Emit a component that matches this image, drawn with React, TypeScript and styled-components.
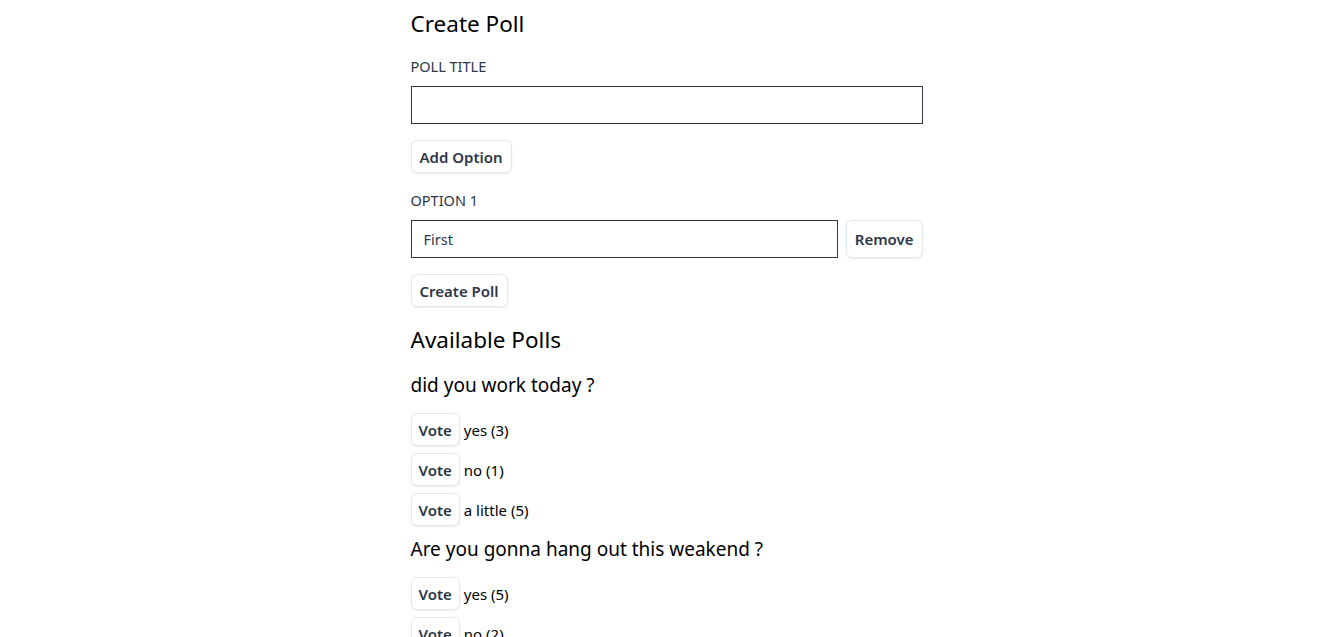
import React from 'react';
import styled, { createGlobalStyle } from 'styled-components';

const GlobalStyle = createGlobalStyle`
  * {
    box-sizing: border-box;
  }
  body {
    margin: 0;
    background: #fff;
    font-family: 'Noto Sans', 'Open Sans', sans-serif;
    color: #000;
  }
`;

const Container = styled.div`
  max-width: 512px;
  margin: 0 auto;
  padding-top: 8px;
`;

const Title = styled.h2`
  font-size: 22.5px;
  line-height: 32px;
  font-weight: 400;
  margin: 0 0 16px;
`;

const Label = styled.label`
  display: block;
  font-size: 14.5px;
  line-height: 20px;
  text-transform: uppercase;
  color: #2d3748;
  margin-bottom: 10px;
`;

const Input = styled.input`
  display: block;
  width: 100%;
  height: 38px;
  border: 1px solid #2d3748;
  border-radius: 0;
  padding: 0 12px;
  font-family: inherit;
  font-size: 14.5px;
  color: #2d3748;
  outline: none;
`;

const Field = styled.div`
  margin-bottom: 16px;
`;

const Button = styled.button`
  background: #fff;
  border: 1px solid #e2e8f0;
  border-radius: 6px;
  box-shadow: 0 1px 2px rgba(0, 0, 0, 0.08);
  padding: 0 8px;
  height: 33px;
  font-family: inherit;
  font-size: 15px;
  font-weight: 600;
  color: #2d3748;
  cursor: pointer;
`;

const ActionRow = styled.div`
  margin-bottom: 17px;
`;

const OptionRow = styled.div`
  display: flex;
  gap: 8px;
  ${Input} {
    flex: 1;
  }
  ${Button} {
    height: auto;
  }
`;

const PollQuestion = styled.h3`
  font-size: 19px;
  line-height: 28px;
  font-weight: 400;
  margin: 0 0 14px;
`;

const VoteList = styled.div`
  display: flex;
  flex-direction: column;
  gap: 7px;
  margin-bottom: 9px;
`;

const VoteRow = styled.div`
  display: flex;
  align-items: center;
  gap: 4px;
  font-size: 15px;

  ${Button} {
    padding: 0 7px;
  }
`;

const PollsTitle = styled(Title)`
  margin-bottom: 15px;
`;

const polls = [
  {
    question: 'did you work today ?',
    options: [
      { text: 'yes', votes: 3 },
      { text: 'no', votes: 1 },
      { text: 'a little', votes: 5 },
    ],
  },
  {
    question: 'Are you gonna hang out this weakend ?',
    options: [
      { text: 'yes', votes: 5 },
      { text: 'no', votes: 2 },
    ],
  },
];

export default function App() {
  return (
    <>
      <GlobalStyle />
      <Container>
        <Title>Create Poll</Title>
        <Field>
          <Label>Poll Title</Label>
          <Input />
        </Field>
        <ActionRow>
          <Button>Add Option</Button>
        </ActionRow>
        <Field>
          <Label>Option 1</Label>
          <OptionRow>
            <Input defaultValue="First" />
            <Button>Remove</Button>
          </OptionRow>
        </Field>
        <ActionRow>
          <Button>Create Poll</Button>
        </ActionRow>
        <PollsTitle>Available Polls</PollsTitle>
        {polls.map((poll) => (
          <div key={poll.question}>
            <PollQuestion>{poll.question}</PollQuestion>
            <VoteList>
              {poll.options.map((o) => (
                <VoteRow key={o.text}>
                  <Button>Vote</Button>
                  <span>
                    {o.text} ({o.votes})
                  </span>
                </VoteRow>
              ))}
            </VoteList>
          </div>
        ))}
      </Container>
    </>
  );
}
